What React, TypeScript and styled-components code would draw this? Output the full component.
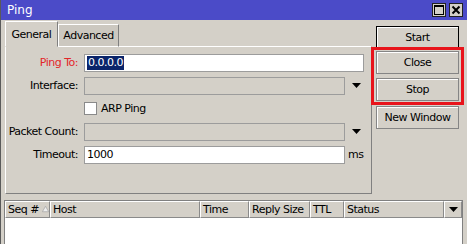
import React from 'react';
import styled, { createGlobalStyle } from 'styled-components';

const GlobalStyle = createGlobalStyle`
  html, body {
    margin: 0;
    padding: 0;
    background: #d4d0c8;
  }
  body {
    font-family: "DejaVu Sans", "Liberation Sans", sans-serif;
    font-size: 11px;
    letter-spacing: -0.5px;
    color: #000;
  }
`;

type Field = {
  label: string;
  value?: string;
  selected?: boolean;
  red?: boolean;
  disabled?: boolean;
  dropdown?: boolean;
  suffix?: string;
  wide?: boolean;
};

const fields: Field[] = [
  { label: 'Ping To:', value: '0.0.0.0', selected: true, red: true, wide: true },
  { label: 'Interface:', disabled: true, dropdown: true },
];

const moreFields: Field[] = [
  { label: 'Packet Count:', disabled: true, dropdown: true },
  { label: 'Timeout:', value: '1000', suffix: 'ms' },
];

const columns = [
  { title: 'Seq #', sort: true },
  { title: 'Host' },
  { title: 'Time' },
  { title: 'Reply Size' },
  { title: 'TTL' },
  { title: 'Status' },
];

const DownArrow = () => (
  <svg width="9" height="5" viewBox="0 0 9 5">
    <path d="M0 0 H9 L4.5 5 Z" fill="#000" />
  </svg>
);

const FieldRow = ({ f }: { f: Field }) => (
  <>
    <Label $red={f.red}>{f.label}</Label>
    <Input $disabled={f.disabled} $wide={f.wide}>
      {f.selected ? <Selected>{f.value}</Selected> : f.value}
    </Input>
    {!f.wide && (
      <Suffix $arrow={f.dropdown}>{f.dropdown ? <DownArrow /> : f.suffix}</Suffix>
    )}
  </>
);

const App = () => {
  return (
    <>
      <GlobalStyle />
      <Window>
        <TitleBar>
          <Title>Ping</Title>
          <TitleButtons>
            <TitleButton>
              <svg width="10" height="10" viewBox="0 0 10 10">
                <rect x="0.5" y="0.5" width="9" height="9" fill="none" stroke="#000" />
                <rect x="0" y="0" width="10" height="2" fill="#000" />
              </svg>
            </TitleButton>
            <TitleButton>
              <svg width="10" height="10" viewBox="0 0 10 10">
                <path d="M1.5 1.5 L8.5 8.5 M8.5 1.5 L1.5 8.5" stroke="#000" strokeWidth="2" />
              </svg>
            </TitleButton>
          </TitleButtons>
        </TitleBar>
        <Content>
          <Top>
            <LeftColumn>
              <TabRow>
                <Tab $active>General</Tab>
                <Tab>Advanced</Tab>
              </TabRow>
              <Panel>
                <FormGrid>
                  {fields.map((f) => (
                    <FieldRow key={f.label} f={f} />
                  ))}
                  <span />
                  <CheckRow>
                    <CheckBox />
                    ARP Ping
                  </CheckRow>
                  <span />
                  {moreFields.map((f) => (
                    <FieldRow key={f.label} f={f} />
                  ))}
                </FormGrid>
              </Panel>
            </LeftColumn>
            <ButtonColumn>
              <Button $default>Start</Button>
              <Highlight>
                <Button>Close</Button>
                <Button>Stop</Button>
              </Highlight>
              <Button $gap={1}>New Window</Button>
            </ButtonColumn>
          </Top>
          <Table>
            <HeaderRow>
              {columns.map((c) => (
                <HeaderCell key={c.title}>
                  {c.title}
                  {c.sort && (
                    <SortMark width="9" height="8" viewBox="0 0 9 8">
                      <path d="M4.5 0.5 L8.5 7.5 H0.5 Z" fill="#eeeeee" stroke="#a8a8a8" />
                    </SortMark>
                  )}
                </HeaderCell>
              ))}
              <HeaderCell $center>
                <DownArrow />
              </HeaderCell>
            </HeaderRow>
            <TableBody />
          </Table>
        </Content>
      </Window>
    </>
  );
};

const Window = styled.div`
  width: 467px;
  height: 244px;
  box-sizing: border-box;
  display: flex;
  flex-direction: column;
  background: #d4d0c8;
  border-left: 1px solid #5a5a5a;
  overflow: hidden;
`;

const TitleBar = styled.div`
  height: 20px;
  flex: none;
  display: flex;
  align-items: center;
  justify-content: space-between;
  background: #4b4bc8;
  padding: 0 4px 0 6px;
`;

const Title = styled.span`
  color: #fff;
  font-size: 12px;
  letter-spacing: 0;
`;

const TitleButtons = styled.div`
  display: flex;
  gap: 3px;
`;

const TitleButton = styled.div`
  width: 12px;
  height: 12px;
  display: flex;
  align-items: center;
  justify-content: center;
  background: #d4d0c8;
  border: 1px solid #222;
`;

const Content = styled.div`
  flex: 1;
  display: flex;
  flex-direction: column;
  padding: 0 3px 0 3px;
`;

const Top = styled.div`
  display: flex;
  gap: 4px;
`;

const LeftColumn = styled.div`
  width: 367px;
  margin-left: 1px;
  display: flex;
  flex-direction: column;
`;

const TabRow = styled.div`
  height: 27px;
  display: flex;
  align-items: flex-end;
  margin-bottom: -1px;
  position: relative;
  z-index: 1;
`;

const Tab = styled.div<{ $active?: boolean }>`
  box-sizing: border-box;
  height: ${(p) => (p.$active ? '26px' : '23px')};
  width: ${(p) => (p.$active ? '53px' : '61px')};
  display: flex;
  align-items: center;
  justify-content: center;
  background: ${(p) => (p.$active ? '#d4d0c8' : '#ccc8c0')};
  border-top: 1px solid #fff;
  border-left: 1px solid #fff;
  border-right: 1px solid #808080;
  border-bottom: ${(p) => (p.$active ? '1px solid #d4d0c8' : '1px solid #fff')};
`;

const Panel = styled.div`
  box-sizing: border-box;
  height: 148px;
  border-top: 1px solid #fff;
  border-left: 1px solid #fff;
  border-right: 1px solid #808080;
  border-bottom: 1px solid #808080;
  padding: 7px 7px 0 0;
`;

const FormGrid = styled.div`
  display: grid;
  grid-template-columns: 72px 261px 1fr;
  grid-auto-rows: 17px;
  column-gap: 6px;
  row-gap: 6px;
  align-items: center;
`;

const Label = styled.span<{ $red?: boolean }>`
  text-align: right;
  color: ${(p) => (p.$red ? '#e3262a' : '#000')};
  white-space: nowrap;
`;

const Input = styled.div<{ $disabled?: boolean; $wide?: boolean }>`
  box-sizing: border-box;
  height: 18px;
  grid-column: ${(p) => (p.$wide ? 'span 2' : 'auto')};
  display: flex;
  align-items: center;
  padding-left: 2px;
  background: ${(p) => (p.$disabled ? '#d4d0c8' : '#fff')};
  border: 1px solid #9c9c9c;
`;

const Selected = styled.span`
  background: #0a246a;
  color: #fff;
  padding: 0 1px;
  line-height: 14px;
`;

const Suffix = styled.span<{ $arrow?: boolean }>`
  display: flex;
  align-items: center;
  margin-left: -6px;
  padding-left: ${(p) => (p.$arrow ? '7px' : '3px')};
`;

const CheckRow = styled.label`
  display: flex;
  align-items: center;
  gap: 4px;
`;

const CheckBox = styled.span`
  width: 11px;
  height: 11px;
  background: #fff;
  border: 1px solid #8a8a8a;
`;

const ButtonColumn = styled.div`
  width: 83px;
  display: flex;
  flex-direction: column;
  padding-top: 6px;
`;

const Button = styled.div<{ $default?: boolean; $gap?: number }>`
  box-sizing: border-box;
  height: ${(p) => (p.$default ? '22px' : '23px')};
  margin-top: ${(p) => p.$gap ?? 0}px;
  display: flex;
  align-items: center;
  justify-content: center;
  background: #d4d0c8;
  border: 1px solid ${(p) => (p.$default ? '#000' : '#858585')};
  box-shadow: inset 1px 1px 0 #fff;
`;

const Highlight = styled.div`
  margin: -1px -5px 0 -5px;
  border: 3px solid #e8141b;
  padding: 1px 2px;
  display: flex;
  flex-direction: column;
  gap: 4px;
`;

const Table = styled.div`
  margin-top: 6px;
  flex: 1;
  display: flex;
  flex-direction: column;
  border-top: 1px solid #808080;
  border-left: 1px solid #808080;
  border-right: 1px solid #808080;
  margin-right: 1px;
`;

const HeaderRow = styled.div`
  display: grid;
  grid-template-columns: 45px 150px 49px 61px 34px 100px 1fr;
  height: 17px;
`;

const HeaderCell = styled.div<{ $center?: boolean }>`
  box-sizing: border-box;
  display: flex;
  align-items: center;
  justify-content: ${(p) => (p.$center ? 'center' : 'flex-start')};
  padding-left: ${(p) => (p.$center ? '0' : '2px')};
  background: #d4d0c8;
  border-top: 1px solid #fff;
  border-left: 1px solid #fff;
  border-right: 1px solid #8a8a8a;
  border-bottom: 1px solid #8a8a8a;
  white-space: nowrap;
`;

const SortMark = styled.svg`
  margin-left: 3px;
  margin-top: -2px;
`;

const TableBody = styled.div`
  flex: 1;
  background: #fff;
`;

export default App;
